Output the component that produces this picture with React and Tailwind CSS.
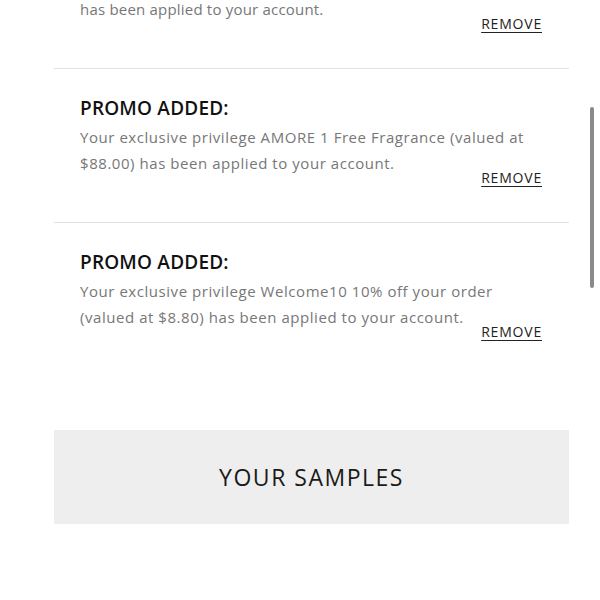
export default function App() {
  const font = { fontFamily: '"Open Sans", "Liberation Sans", sans-serif' };
  const Remove = () => (
    <div className="flex justify-end -mt-[6px]">
      <button className="text-[14px] leading-[16px] font-normal tracking-[0.8px] text-[#222] underline underline-offset-[3px] decoration-[1px]">
        REMOVE
      </button>
    </div>
  );
  const items = [
    {
      lines: "Your exclusive privilege AMORE 1 Free Fragrance (valued at $88.00) has been applied to your account.",
    },
    {
      lines: "Your exclusive privilege Welcome10 10% off your order (valued at $8.80) has been applied to your account.",
    },
  ];
  return (
    <div className="relative w-[600px] h-[600px] overflow-hidden bg-white" style={font}>
      <div className="ml-[54px] w-[515px]">
        <div className="border-b border-[#e2e2e2] pl-[26px] pr-[27px] pb-[36px]">
          <p className="-mt-[4px] text-[15px] leading-[26px] tracking-[0.2px] text-[#777]">has been applied to your account.</p>
          <Remove />
        </div>
        {items.map((it, i) => (
          <div
            key={i}
            className={`pl-[26px] pr-[27px] pt-[27px] pb-[36px] ${i === 0 ? "border-b border-[#e2e2e2]" : ""}`}
          >
            <h3 className="text-[19px] leading-[24px] font-semibold text-[#111] tracking-[0.2px]">PROMO ADDED:</h3>
            <p className="mt-[4px] text-[15px] leading-[26px] tracking-[0.55px] text-[#777] pr-[2px]">{it.lines}</p>
            <Remove />
          </div>
        ))}
        <div className="mt-[54px] h-[94px] bg-[#eeeeee] flex items-center justify-center">
          <h2 className="text-[23px] font-medium tracking-[1.5px] text-[#1a1a1a]">YOUR SAMPLES</h2>
        </div>
      </div>
      <div className="absolute left-[590px] top-[107px] w-[4px] h-[181px] rounded-full bg-[#8a8a8a]" />
    </div>
  );
}
